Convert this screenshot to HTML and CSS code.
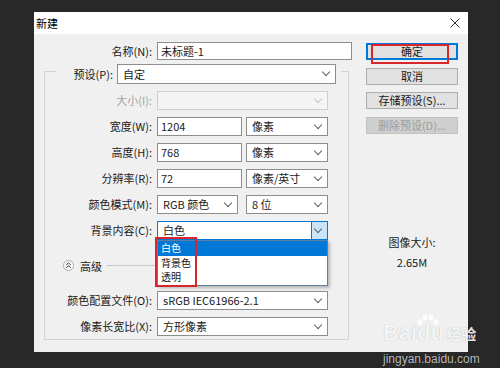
FILE: index.html
```html
<!DOCTYPE html>
<html lang="zh-CN">
<head>
  <meta charset="UTF-8" />
  <title>新建</title>
  <link rel="stylesheet" href="styles.css">
</head>
<body>

  <div class="dialog">
    <div class="titlebar">
      <span class="title">新建</span>
      <svg class="close" width="10" height="10" viewBox="0 0 10 10">
        <path d="M0.5 0.5 L9.5 9.5 M9.5 0.5 L0.5 9.5" stroke="#333" stroke-width="1" fill="none"/>
      </svg>
    </div>

    <div class="content">
      <!-- left: the form -->
      <div class="form">
        <div class="name-row">
          <span class="lbl">名称(N):</span>
          <div class="field text name">未标题-1</div>
        </div>

        <fieldset class="group">
          <legend>
            <div class="legend-row">
              <span class="lbl-preset">预设(P):</span>
              <div class="field select preset">自定</div>
            </div>
          </legend>

          <div class="grid">
            <span class="lbl off">大小(I):</span>
            <div class="field select off"></div>

            <span class="lbl">宽度(W):</span>
            <div class="pair">
              <div class="field text num">1204</div>
              <div class="field select">像素</div>
            </div>

            <span class="lbl">高度(H):</span>
            <div class="pair">
              <div class="field text num">768</div>
              <div class="field select">像素</div>
            </div>

            <span class="lbl">分辨率(R):</span>
            <div class="pair">
              <div class="field text num">72</div>
              <div class="field select">像素/英寸</div>
            </div>

            <span class="lbl">颜色模式(M):</span>
            <div class="pair mode">
              <div class="field select mode-sel">RGB 颜色</div>
              <div class="field select">8 位</div>
            </div>

            <span class="lbl">背景内容(C):</span>
            <div class="field select open">白色
              <ul class="dropdown">
                <li class="active">白色</li>
                <li>背景色</li>
                <li>透明</li>
              </ul>
              <div class="mark mark-list"></div>
            </div>

            <div class="advanced">
              <svg width="11" height="11" viewBox="0 0 11 11">
                <circle cx="5.5" cy="5.5" r="5" fill="#fcfcfc" stroke="#a9a9a9"/>
                <path d="M3.2 5 L5.5 2.9 L7.8 5 M3.2 7.8 L5.5 5.7 L7.8 7.8" stroke="#333" fill="none"/>
              </svg>
              <span>高级</span>
              <div class="rule"></div>
            </div>

            <span class="lbl">颜色配置文件(O):</span>
            <div class="field select">sRGB IEC61966-2.1</div>

            <span class="lbl">像素长宽比(X):</span>
            <div class="field select">方形像素</div>
          </div>
        </fieldset>
      </div>

      <!-- right: buttons and image size -->
      <div class="side">
        <div class="btn default">确定
          <div class="mark mark-ok"></div>
        </div>
        <div class="btn">取消</div>
        <div class="btn">存储预设(S)...</div>
        <div class="btn off">删除预设(D)...</div>
        <div class="info">
          <div>图像大小:</div>
          <div>2.65M</div>
        </div>
      </div>
    </div>

    <div class="watermark">
      <div class="wm-main">
        <span class="wm-bai">Bai</span><span class="wm-du">du
          <svg class="paw" width="24" height="14" viewBox="0 0 24 14">
            <ellipse cx="4" cy="8" rx="2.4" ry="3"/>
            <ellipse cx="9" cy="3.5" rx="2.4" ry="3"/>
            <ellipse cx="15" cy="3.5" rx="2.4" ry="3"/>
            <ellipse cx="20" cy="8" rx="2.4" ry="3"/>
          </svg>
        </span><span class="wm-jy">经验</span>
      </div>
      <div class="wm-url">jingyan.baidu.com</div>
    </div>
  </div>

</body>
</html>
```

FILE: styles.css
```css
* {
  box-sizing: border-box;
}
body {
  margin: 0;
  height: 368px;
  overflow: hidden;
  background-color: #282828;
  padding: 12px 0 0 34px;
  font-family: "Noto Sans CJK SC", "Noto Sans", sans-serif;
  font-size: 11px;
  color: #1a1a1a;
}
.dialog {
  width: 434px;
  position: relative;
}
.titlebar {
  height: 22px;
  background-color: #fff;
  display: flex;
  align-items: center;
  justify-content: space-between;
  padding: 0 8px 0 2px;
  color: #000;
}
.content {
  height: 318px;
  background-color: #f0f0f0;
  display: flex;
}
.form {
  width: 332px;
  padding: 8px 0 0 10px;
}
.name-row {
  display: flex;
  gap: 5px;
  height: 18px;
}
.name-row .lbl {
  width: 108px;
  line-height: 18px;
}
.lbl {
  text-align: right;
  line-height: 19px;
  white-space: nowrap;
}
.lbl.off {
  color: #a3a3a3;
}
.field {
  position: relative;
  height: 19px;
  background-color: #fff;
  border: 1px solid #8d8d8d;
  line-height: 17px;
  white-space: nowrap;
}
.field.text {
  padding-left: 3px;
}
.field.name {
  width: 195px;
  height: 18px;
  line-height: 16px;
}
.field.select {
  padding-left: 5px;
}
.field.select::after {
  content: "";
  position: absolute;
  right: 6px;
  top: 4px;
  width: 5px;
  height: 5px;
  border-right: 1px solid #606060;
  border-bottom: 1px solid #606060;
  transform: rotate(45deg);
}
.field.off {
  background-color: #f4f4f4;
  border-color: #cfcfcf;
}
.field.off::after {
  border-color: #c4c4c4;
}
.field.open {
  border-color: #0078d7;
}
.field.open::before {
  content: "";
  position: absolute;
  right: 0;
  top: 0;
  bottom: 0;
  width: 15px;
  background-color: #cce4f7;
  border-left: 1px solid #0078d7;
}

/* group box */
.group {
  width: 305px;
  margin: -2px 0 0;
  padding: 7px 0 3px;
  border: 1px solid #d3d3d3;
}
.group legend {
  margin-left: 11px;
  padding: 6px 5px 0 0;
}
.legend-row {
  display: flex;
  align-items: center;
  gap: 4px;
}
.lbl-preset {
  width: 57px;
  text-align: right;
}
.field.preset {
  width: 219px;
  height: 20px;
  line-height: 18px;
}
.grid {
  display: grid;
  grid-template-columns: 107px 171px;
  column-gap: 5px;
  row-gap: 7px;
}
.pair {
  display: flex;
  gap: 4px;
}
.pair .num {
  width: 85px;
}
.pair .field {
  flex: 1;
}
.pair .num,
.pair .mode-sel {
  flex: none;
}
.pair.mode {
  gap: 8px;
}
.mode-sel {
  width: 81px;
}

/* open list */
.dropdown {
  list-style: none;
  margin: 0;
  padding: 0;
  position: absolute;
  top: 18px;
  left: -1px;
  right: -1px;
  background-color: #fff;
  border: 1px solid #5f7ea0;
  box-shadow: 2px 2px 3px rgba(0, 0, 0, 0.25);
  z-index: 2;
}
.dropdown li {
  height: 14.5px;
  line-height: 14.5px;
  font-size: 10px;
  padding-left: 3px;
  color: #111;
}
.dropdown li.active {
  background-color: #0078d7;
  color: #fff;
}
.mark {
  position: absolute;
  border: 2px solid #d8262c;
  z-index: 3;
}
.mark-list {
  left: -3px;
  top: 15px;
  width: 42px;
  height: 50px;
}

.advanced {
  grid-column: 1 / -1;
  margin: 9px 0;
  height: 19px;
  display: flex;
  align-items: center;
  padding-left: 18px;
}
.advanced svg {
  margin-right: 6px;
}
.advanced .rule {
  flex: 1;
  height: 1px;
  margin: 0 40px 0 5px;
  background-color: #c9c9c9;
}

/* buttons */
.side {
  width: 92px;
  padding-top: 9px;
  display: flex;
  flex-direction: column;
  gap: 7.5px;
}
.btn {
  position: relative;
  height: 17px;
  background-color: #e1e1e1;
  border: 1px solid #adadad;
  text-align: center;
  line-height: 15px;
}
.btn.default {
  border: 2px solid #0078d7;
  line-height: 13px;
}
.btn.off {
  background-color: #cfcfcf;
  border-color: #c2c2c2;
  color: #9c9c9c;
}
.mark-ok {
  left: 3px;
  top: -1px;
  width: 78px;
  height: 20px;
}
.info {
  margin-top: 91px;
  text-align: center;
  line-height: 20px;
}

/* baidu watermark */
.watermark {
  position: absolute;
  left: 349px;
  top: 308px;
  z-index: 5;
  color: rgba(255, 255, 255, 0.9);
  text-shadow: 0 0 1px rgba(0, 0, 0, 0.3);
}
.wm-main {
  display: flex;
  align-items: baseline;
  height: 25px;
  font-family: "Liberation Sans", sans-serif;
  font-weight: bold;
}
.wm-bai,
.wm-du {
  font-size: 22px;
  line-height: 25px;
}
.wm-du {
  position: relative;
}
.paw {
  position: absolute;
  left: -1px;
  top: -6px;
  fill: rgba(255, 255, 255, 0.9);
}
.wm-jy {
  margin-left: 2px;
  font-family: "Noto Sans CJK SC", sans-serif;
  font-size: 15px;
}
.wm-url {
  margin-top: 7px;
  font-family: "Liberation Sans", sans-serif;
  font-size: 12px;
  color: rgba(215, 215, 215, 0.85);
}
```
